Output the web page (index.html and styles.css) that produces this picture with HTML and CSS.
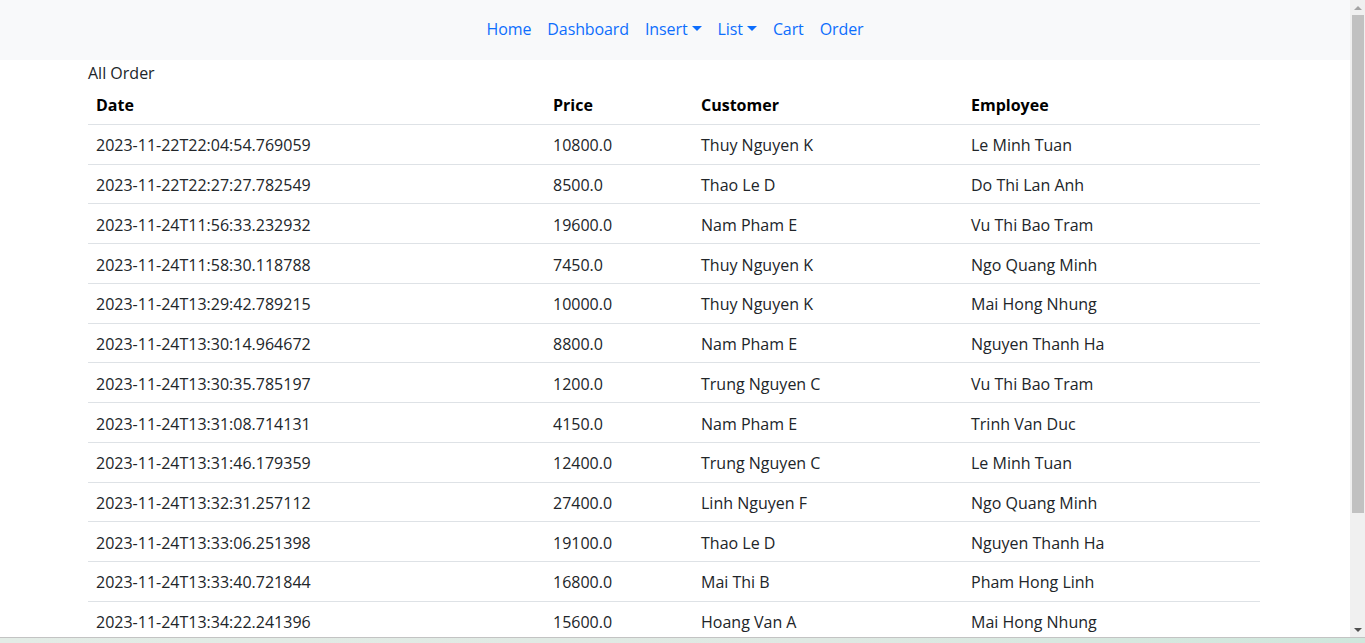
FILE: index.html
```html
<!DOCTYPE html>
<html lang="en">
<head>
<meta charset="utf-8">
<title>All Order</title>
<link rel="stylesheet" href="styles.css">
</head>
<body>
<div class="window">
  <div class="app">
    <div class="page">
      <nav class="navbar">
        <ul class="nav">
          <li><a class="nav-link" href="#">Home</a></li>
          <li><a class="nav-link" href="#">Dashboard</a></li>
          <li><a class="nav-link dropdown-toggle" href="#">Insert</a></li>
          <li><a class="nav-link dropdown-toggle" href="#">List</a></li>
          <li><a class="nav-link" href="#">Cart</a></li>
          <li><a class="nav-link" href="#">Order</a></li>
        </ul>
      </nav>
      <main class="content">
        <div class="title">All Order</div>
        <table class="table">
          <colgroup>
            <col class="col-date">
            <col class="col-price">
            <col class="col-customer">
            <col class="col-employee">
          </colgroup>
          <thead>
            <tr><th>Date</th><th>Price</th><th>Customer</th><th>Employee</th></tr>
          </thead>
          <tbody>
            <tr><td>2023-11-22T22:04:54.769059</td><td>10800.0</td><td>Thuy Nguyen K</td><td>Le Minh Tuan</td></tr>
            <tr><td>2023-11-22T22:27:27.782549</td><td>8500.0</td><td>Thao Le D</td><td>Do Thi Lan Anh</td></tr>
            <tr><td>2023-11-24T11:56:33.232932</td><td>19600.0</td><td>Nam Pham E</td><td>Vu Thi Bao Tram</td></tr>
            <tr><td>2023-11-24T11:58:30.118788</td><td>7450.0</td><td>Thuy Nguyen K</td><td>Ngo Quang Minh</td></tr>
            <tr><td>2023-11-24T13:29:42.789215</td><td>10000.0</td><td>Thuy Nguyen K</td><td>Mai Hong Nhung</td></tr>
            <tr><td>2023-11-24T13:30:14.964672</td><td>8800.0</td><td>Nam Pham E</td><td>Nguyen Thanh Ha</td></tr>
            <tr><td>2023-11-24T13:30:35.785197</td><td>1200.0</td><td>Trung Nguyen C</td><td>Vu Thi Bao Tram</td></tr>
            <tr><td>2023-11-24T13:31:08.714131</td><td>4150.0</td><td>Nam Pham E</td><td>Trinh Van Duc</td></tr>
            <tr><td>2023-11-24T13:31:46.179359</td><td>12400.0</td><td>Trung Nguyen C</td><td>Le Minh Tuan</td></tr>
            <tr><td>2023-11-24T13:32:31.257112</td><td>27400.0</td><td>Linh Nguyen F</td><td>Ngo Quang Minh</td></tr>
            <tr><td>2023-11-24T13:33:06.251398</td><td>19100.0</td><td>Thao Le D</td><td>Nguyen Thanh Ha</td></tr>
            <tr><td>2023-11-24T13:33:40.721844</td><td>16800.0</td><td>Mai Thi B</td><td>Pham Hong Linh</td></tr>
            <tr><td>2023-11-24T13:34:22.241396</td><td>15600.0</td><td>Hoang Van A</td><td>Mai Hong Nhung</td></tr>
          </tbody>
        </table>
      </main>
    </div>
    <div class="scrollbar">
      <div class="sb-arrow sb-up"></div>
      <div class="sb-track"><div class="sb-thumb"></div></div>
      <div class="sb-arrow sb-down"></div>
    </div>
  </div>
  <div class="bottom-strip"></div>
</div>
</body>
</html>
```
FILE: styles.css
```css
* { box-sizing: border-box; }
html, body {
  margin: 0;
  height: 100%;
  overflow: hidden;
}
body {
  font-family: "Open Sans", "Noto Sans", sans-serif;
  font-size: 16px;
  line-height: 24px;
  color: #212529;
  background: #fff;
}
.window {
  display: flex;
  flex-direction: column;
  height: 100%;
}
.app {
  flex: 1;
  display: flex;
  min-height: 0;
}
.page {
  flex: 1;
  overflow: hidden;
  background: #fff;
}
.navbar {
  height: 60px;
  padding-bottom: 2px;
  background: #f8f9fa;
  display: flex;
  align-items: center;
  justify-content: center;
}
.nav {
  list-style: none;
  margin: 0;
  padding: 0;
  display: flex;
}
.nav-link {
  display: block;
  padding: 0 8px;
  color: #0d6efd;
  text-decoration: none;
  line-height: 24px;
  letter-spacing: -0.1px;
}
.dropdown-toggle::after {
  content: "";
  display: inline-block;
  margin-left: 4px;
  vertical-align: 4px;
  border-top: 5px solid;
  border-left: 5px solid transparent;
  border-right: 5px solid transparent;
}
.content {
  padding: 0 90px 0 88px;
}
.title {
  height: 24px;
  line-height: 26px;
}
.table {
  width: 100%;
  border-collapse: collapse;
  table-layout: fixed;
}
.col-date { width: 457px; }
.col-price { width: 148px; }
.col-customer { width: 270px; }
.col-employee { width: 297px; }
.table th {
  text-align: left;
  font-weight: 700;
  color: #000;
  padding: 9px 8px 7px 8px;
  border-bottom: 1px solid #dee2e6;
}
.table td {
  padding: 8.4px 8px 6.35px 8px;
  border-bottom: 1px solid #dee2e6;
  white-space: nowrap;
}
.scrollbar {
  width: 15px;
  background: #f0f0f0;
  display: flex;
  flex-direction: column;
}
.sb-arrow {
  height: 15px;
  display: flex;
  align-items: center;
  justify-content: center;
}
.sb-up::before {
  content: "";
  border-bottom: 4px solid #a3a3a3;
  border-left: 4px solid transparent;
  border-right: 4px solid transparent;
}
.sb-down::before {
  content: "";
  border-top: 4px solid #505050;
  border-left: 4px solid transparent;
  border-right: 4px solid transparent;
}
.sb-track {
  flex: 1;
  padding: 0 1px 0 2px;
}
.sb-thumb {
  height: 498px;
  background: #c1c1c1;
}
.bottom-strip {
  height: 6px;
  border-top: 1px solid #c3c3c3;
  background: linear-gradient(90deg, #e3ece6 0%, #dfe9e3 60%, #cfe7dc 100%);
}
```
